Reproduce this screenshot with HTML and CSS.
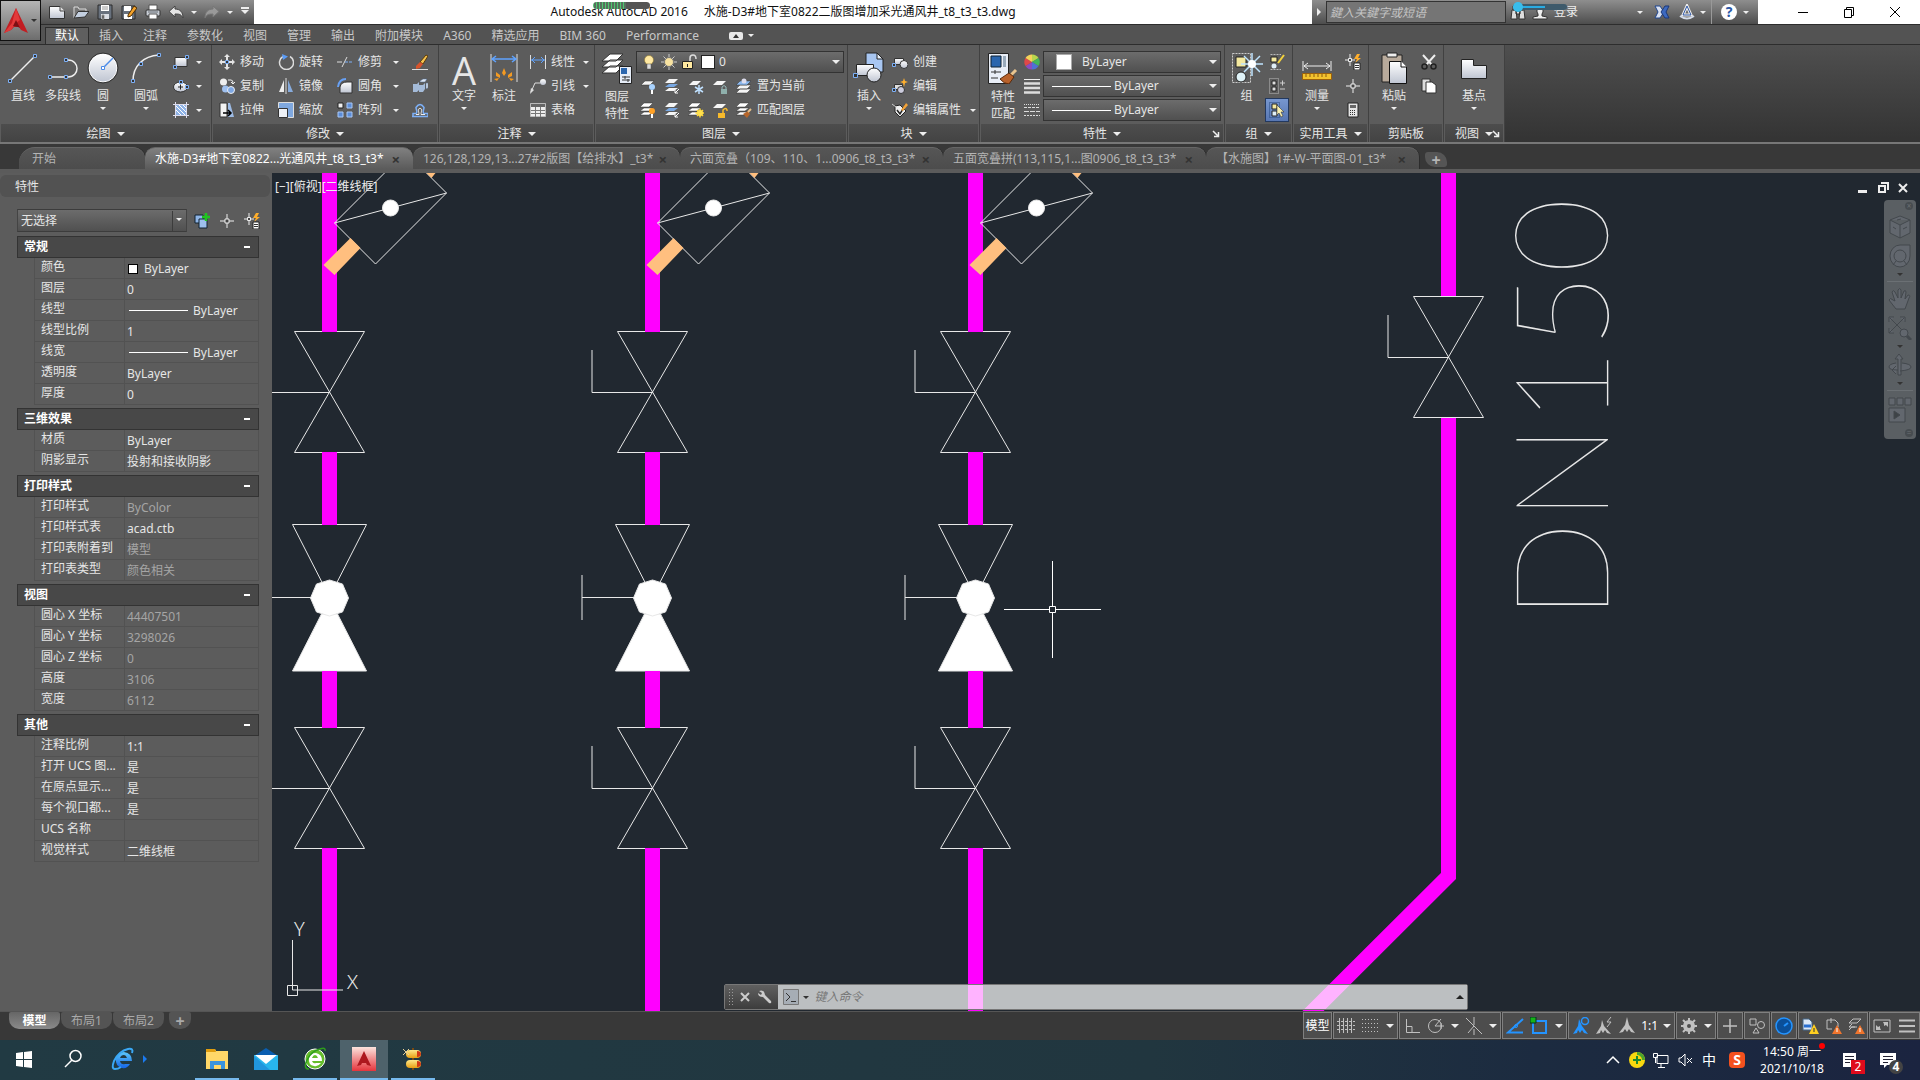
FILE: index.html
```html
<!DOCTYPE html>
<html lang="zh-CN">
<head>
<meta charset="utf-8">
<meta name="viewport" content="width=device-width, initial-scale=1.0">
<title>Autodesk AutoCAD 2016</title>
<link rel="stylesheet" href="styles.css">
</head>
<body>
<!-- icon symbols -->
<svg class="defs" aria-hidden="true">
<defs>
<linearGradient id="gw" x1="0" y1="0" x2="0" y2="1"><stop offset="0" stop-color="#fff"/><stop offset="1" stop-color="#bfc5d2"/></linearGradient>
<linearGradient id="gb" x1="0" y1="0" x2="0" y2="1"><stop offset="0" stop-color="#5cc8fb"/><stop offset="1" stop-color="#1565e8"/></linearGradient>
<linearGradient id="gr" x1="0" y1="0" x2="0" y2="1"><stop offset="0" stop-color="#fce3dd"/><stop offset="1" stop-color="#e5343c"/></linearGradient>
<linearGradient id="gy" x1="0" y1="0" x2="0" y2="1"><stop offset="0" stop-color="#ffe98a"/><stop offset="1" stop-color="#e9a013"/></linearGradient>

<symbol id="logo" viewBox="0 0 24 26"><path d="M12 0 0 25l7-3 3-3h5l2 3 7 3Z" fill="#c21d22"/><path d="M12 0 8 15 0 25l7-3 5-7 4-3Z" fill="#e2393a"/><path d="m9 18 3-6 4 8-2-1Z" fill="#7c0f14"/></symbol>
<symbol id="new" viewBox="0 0 16 16"><path d="M.5 2.500h11l4 4v8H.5Z" fill="url(#gw)" stroke="#333"/><path d="M11 2v5h5" fill="#ddd" stroke="#444"/></symbol>
<symbol id="open" viewBox="0 0 16 16"><path d="M1 14V3h4l1 2h7v3" fill="#777" stroke="#ddd"/><path d="M1 14 5 7.500h11L12 13Z" fill="#c3cfe0" stroke="#333"/></symbol>
<symbol id="save" viewBox="0 0 16 16"><path d="M1 1h14v14H1Z" fill="#68717d" stroke="#2d2d2d"/><path d="M4 1h8v6H4Z" fill="#fff"/><path d="M4 10h8v5H4Z" fill="#d9dde4"/><path d="M5 11h2v4H5ZM5 3h6M5 5h6" fill="#333" stroke="#999"/></symbol>
<symbol id="saveas" viewBox="0 0 16 16"><path d="M1 2h13v13H1Z" fill="#68717d" stroke="#2d2d2d"/><path d="M3 2h7v5H3ZM3 10h8v5H3Z" fill="#fff"/><path d="m7 11 6-9 3 2-6 8-3 1Z" fill="#f3a22b" stroke="#4d2e05"/></symbol>
<symbol id="print" viewBox="0 0 16 16"><path d="M4 6V1h8v5" fill="#fff" stroke="#555"/><rect x="1" y="6" width="14" height="6" rx="1" fill="#c9ced6" stroke="#333"/><path d="M4 10h8v5H4Z" fill="#fff" stroke="#555"/><path d="M3 8h10" stroke="#6a7077"/></symbol>
<symbol id="undo" viewBox="0 0 16 16"><path d="M7 2v3c5 0 8 3 8 9-2-4-4-4-8-4v3L1 7.500Z" fill="#e4e4e4" stroke="#444"/></symbol>
<symbol id="redo" viewBox="0 0 16 16"><path d="M9 2v3c-5 0-8 3-8 9 2-4 4-4 8-4v3l6-5.500Z" fill="#999" stroke="#777"/></symbol>
<symbol id="binoc" viewBox="0 0 16 16"><path d="M2 6h4l1 9H1Zm8 0h4l1 9H9ZM3 2h3v4H3Zm7 0h3v4h-3ZM6 7h4v3H6Z" fill="#ddd" stroke="#333"/></symbol>
<symbol id="user" viewBox="0 0 16 16"><path d="M5 3h6v5l-1 2v2l5 1v2H1v-2l5-1v-2L5 8Z" fill="#eee" stroke="#333"/></symbol>
<symbol id="exch" viewBox="0 0 16 16"><path d="M1 2h5l4 6-4 6H1l3-6Z" fill="#d9e1f1" stroke="#20468f"/><path d="M15 2h-4L7 8l4 6h4l-3-6Z" fill="#3c69c0" stroke="#1d3876"/></symbol>
<symbol id="a360" viewBox="0 0 16 16"><path d="M8 2 12 11H4Z" fill="none" stroke="#eee" stroke-width="3"/><path d="M8 2 12 11H4Z" fill="none" stroke="#2e57a6"/><path d="M1 12q7 5 14 0" fill="none" stroke="#d5ddeb" stroke-width="2"/></symbol>
<symbol id="pin" viewBox="0 0 14 8"><rect width="14" height="8" rx="2" fill="#e8e8e8"/><path d="m7 2 3 4H4Z" fill="#333"/></symbol>

<symbol id="line" viewBox="0 0 32 32"><path d="M3 29 28 4" stroke="#eee" stroke-width="1.500"/><path d="M1.500 27.500h3v3h-3ZM26.500 2.500h3v3h-3Z" fill="#333" stroke="#7db0f7"/></symbol>
<symbol id="pline" viewBox="0 0 32 32"><path d="M3 25h18c12 0 12-17 0-17" fill="none" stroke="#eee" stroke-width="1.500"/><path d="M1.500 23.500h3v3h-3ZM17.500 23.500h3v3h-3ZM17.500 6.500h3v3h-3Z" fill="#333" stroke="#7db0f7"/></symbol>
<symbol id="circle" viewBox="0 0 32 32"><circle cx="16" cy="16" r="14" fill="url(#gw)" stroke="#fff"/><circle cx="16" cy="16" r="15" fill="none" stroke="#333"/><path d="M16 16 26 6" stroke="#4a8ae8" stroke-width="1.500"/><path d="M14.500 14.500h3v3h-3Z" fill="#fff" stroke="#4a8ae8"/></symbol>
<symbol id="arc" viewBox="0 0 32 32"><path d="M3 29C3 14 13 4 29 3" fill="none" stroke="#eee" stroke-width="1.500"/><path d="M1.500 27.500h3v3h-3ZM9.500 10.500h3v3h-3ZM27.500 1.500h3v3h-3Z" fill="#333" stroke="#7db0f7"/></symbol>
<symbol id="rect" viewBox="0 0 16 16"><path d="M2 3.500h12v9H2Z" fill="url(#gw)" stroke="#333"/><path d="M.5 11.500h3v3h-3ZM12.500 1.500h3v3h-3Z" fill="#333" stroke="#7db0f7"/></symbol>
<symbol id="ellipse" viewBox="0 0 16 16"><ellipse cx="7.500" cy="9" rx="7" ry="5" fill="url(#gw)" stroke="#333"/><path d="M5 9h5M7.500 6.500v5" stroke="#222"/><path d="M6.500 2.500h3v3h-3ZM12.500 7.500h3v3h-3Z" fill="#333" stroke="#7db0f7"/></symbol>
<symbol id="hatch" viewBox="0 0 16 16"><path d="M3 3h10v10H3Z" fill="#8fb3e6"/><path d="m3 8 5 5M3 4l9 9M6 3l7 7M10 3l3 3" stroke="#fff"/><path d="M2.500 0v16M13.500 0v16M0 2.500h16M0 13.500h16" stroke="#dde" /></symbol>
<symbol id="move" viewBox="0 0 16 16"><path d="m8 0 3 3H9v3H7V3H5ZM8 16l3-3H9v-3H7v3H5ZM0 8l3-3v2h3v2H3v2ZM16 8l-3-3v2h-3v2h3v2Z" fill="#e4e4e4"/><path d="M6.500 6.500h3v3h-3Z" fill="#333" stroke="#7db0f7"/></symbol>
<symbol id="copy" viewBox="0 0 16 16"><circle cx="4.500" cy="4" r="3.500" fill="#eee"/><circle cx="6.500" cy="11" r="3.500" fill="#9fc0ef"/><circle cx="12" cy="12" r="3.500" fill="#7ea8e4" stroke="#eee"/><path d="M9 2h3q2 0 2 3m-2-1 2 2 2-2" fill="none" stroke="#eee"/></symbol>
<symbol id="stretch" viewBox="0 0 16 16"><path d="M1 1h7v14H1Z" fill="#f2f2f2" stroke="#333"/><path d="M9 1h2l4 14H9Z" fill="#9dbbe4"/><path d="M4 11h7M9 8l3 3-3 3" fill="none" stroke="#000" stroke-width="1.500"/></symbol>
<symbol id="rotate" viewBox="0 0 16 16"><path d="M5 2.500a7 7 0 1 0 7 0" fill="none" stroke="#ddd" stroke-width="1.500"/><path d="m4 0 6 2.500L5 6Z" fill="#5a9bf5"/></symbol>
<symbol id="mirror" viewBox="0 0 16 16"><path d="M6 2v12H1Z" fill="#eee"/><path d="M10 2v12h5Z" fill="#87abdc"/><path d="M8 0v16" stroke="#ddd"/></symbol>
<symbol id="scale" viewBox="0 0 16 16"><path d="M.5.5h15v15H.5Z" fill="#7fa8df" stroke="#ddd"/><path d="M.5 6.500h9v9h-9Z" fill="#eef1f6" stroke="#333"/></symbol>
<symbol id="trim" viewBox="0 0 16 16"><path d="M0 8h5M5 13 10 3" stroke="#ddd"/><path d="M8 8h8" stroke="#7db0f7" stroke-dasharray="3 1"/></symbol>
<symbol id="fillet" viewBox="0 0 16 16"><path d="M3 15V9q1-5 7-5h5v11Z" fill="url(#gw)" stroke="#333"/><path d="M1 9Q2 1 9 1" fill="none" stroke="#67a0f4" stroke-width="2"/></symbol>
<symbol id="array" viewBox="0 0 16 16"><path d="M1 1h5v5H1Z" fill="#eee" stroke="#222"/><path d="M10 1h5v5h-5ZM1 10h5v5H1ZM10 10h5v5h-5Z" fill="#5c8dd8" stroke="#a9c8f6"/></symbol>
<symbol id="brush" viewBox="0 0 16 16"><path d="m8 8 6-7 2 1-5 8Z" fill="#f5c350" stroke="#5b3a0a"/><path d="m4 12 4-4 3 2-3 4-4 1Z" fill="#d7542c"/><path d="M0 15.500h16" stroke="#ddd"/></symbol>
<symbol id="explode" viewBox="0 0 16 16"><path d="M1 6h4l2-2v8l-2 2H1ZM7 7h4l2-2v6l-2 3H7Z" fill="#a4bbd9"/><path d="m8 3 3-2h4l-2 3H8Zm6 2h2v5l-2 1Z" fill="#dbe6f5" stroke="#4a6488" stroke-width=".5"/></symbol>
<symbol id="offset" viewBox="0 0 16 16"><path d="M0 14.500h16v-3h-4c-2-1 0-4 0-6q-4-6-8 0c0 2 2 5 0 6H1v3" fill="none" stroke="#7db0f7" stroke-width="1.500"/><path d="M4 12.500h3c0-3-2-6 1-6s1 3 1 6h4" fill="none" stroke="#eee"/></symbol>
<symbol id="dim" viewBox="0 0 32 32"><path d="M3 2v28M29 2v28" stroke="#ddd"/><path d="M4 7h24M8 4 4 7l4 3M24 4l4 3-4 3" fill="none" stroke="#5fa3ff" stroke-width="1.500"/><path d="m16 16 2 5-2 3-2-3ZM8 20l4 3v3l-4-2ZM24 20l-4 3v3l4-2ZM6 27l5-1-2 3ZM26 27l-5-1 2 3Z" fill="#f39a22"/></symbol>
<symbol id="linear" viewBox="0 0 16 16"><path d="M.5 1v14M15.500 1v14" stroke="#ddd"/><path d="M1 6h14M5 3 2 6l3 3M11 3l3 3-3 3" fill="none" stroke="#5fa3ff"/></symbol>
<symbol id="leader" viewBox="0 0 16 16"><path d="M1 14 5 5h5" fill="none" stroke="#ddd"/><path d="m0 16 1-6 3 2Z" fill="#ddd"/><circle cx="13" cy="4" r="3" fill="url(#gw)"/></symbol>
<symbol id="table" viewBox="0 0 16 16"><path d="M.5 1.500h15v13H.5Z" fill="#eee" stroke="#bbb"/><path d="M1 2h14v3H1Z" fill="#666"/><path d="M1 8.500h14M1 11.500h14M5.500 5v10M10.500 5v10" stroke="#777"/></symbol>
<symbol id="layers" viewBox="0 0 32 32"><path d="m1 21 8-7h13l-7 7ZM1 15l8-7h13l-7 7ZM1 9l8-7h13l-7 7Z" fill="#fff" stroke="#333"/><path d="M18.500 14.500h12v17h-12Z" fill="#e6edf8" stroke="#222"/><path d="M20 16h6v6h-6Z" fill="#2b66ae"/><path d="M21 25h8M21 28h8M24 24v3M27 27v3" stroke="#333"/></symbol>
<symbol id="lay1" viewBox="0 0 16 16"><path d="m1 7 4-4h9l-4 4Z" fill="#f5f5f5" stroke="#333" stroke-width=".5"/><circle cx="12" cy="9" r="3" fill="#a9d3ff"/><path d="M12 12v4" stroke="#fff" stroke-width="2"/></symbol>
<symbol id="lay2" viewBox="0 0 16 16"><path d="m1 13 4-3h9l-4 3ZM1 5l4-4h9l-4 4Z" fill="#f5f5f5"/><path d="m1 9 4-3h9l-4 3Z" fill="#78a8e3"/><path d="m15 11-4 4m0-3v3h3" fill="none" stroke="#fff"/></symbol>
<symbol id="lay3" viewBox="0 0 16 16"><path d="m1 7 4-4h8l-4 4Z" fill="#f5f5f5"/><path d="M11 7v9M7 9l8 5M15 9l-8 5" stroke="#bfe0ff" stroke-width="1.500"/></symbol>
<symbol id="lay4" viewBox="0 0 16 16"><path d="m1 7 4-4h9l-4 4Z" fill="#f5f5f5"/><path d="M10 11V9q2-3 4 0v2" fill="none" stroke="#9bb"/><path d="M9 11h6v5H9Z" fill="#8fb0ac"/></symbol>
<symbol id="lay5" viewBox="0 0 16 16"><path d="m0 15 4-4h11l-4 4ZM0 11l4-4h11l-4 4Z" fill="#f5f5f5" stroke="#333" stroke-width=".5"/><path d="m0 7 4-4h11l-4 4Z" fill="#8cb9ef" stroke="#333" stroke-width=".5"/><circle cx="8" cy="3" r="2.500" fill="#dde"/></symbol>
<symbol id="lay6" viewBox="0 0 16 16"><path d="m0 13 4-3h9l-4 3ZM0 9l4-3h9L9 9ZM0 5l4-4h9L9 5Z" fill="#fff" stroke="#333" stroke-width=".5"/><circle cx="12" cy="9" r="3" fill="#ffa126"/><path d="M12 12v4" stroke="#fff" stroke-width="2"/></symbol>
<symbol id="lay7" viewBox="0 0 16 16"><path d="m0 13 4-3h9l-4 3ZM0 9l4-3h9L9 9ZM0 5l4-4h9L9 5Z" fill="#fff" stroke="#333" stroke-width=".5"/><path d="M12 6.500v9M7.500 11h9M9 8l6 6M15 8l-6 6" stroke="#ffd630" stroke-width="1.500"/><circle cx="12" cy="11" r="3" fill="#ffe04d"/></symbol>
<symbol id="lay8" viewBox="0 0 16 16"><path d="m1 6 4-4h9l-4 4Z" fill="#f5f5f5"/><path d="M11 11V8q3-3 4 0v1" fill="none" stroke="#f7ba2b" stroke-width="1.500"/><path d="M6 11h7v5H6Z" fill="#f7ba2b"/></symbol>
<symbol id="lay9" viewBox="0 0 16 16"><path d="m0 13 4-3h9l-4 3ZM0 9l4-3h9L9 9ZM0 5l4-4h9L9 5Z" fill="#fff" stroke="#333" stroke-width=".5"/><path d="m7 12 5-3 2 3-3 4Z" fill="#b5652a"/><path d="m12 10 3-3" stroke="#e9c08a" stroke-width="2"/></symbol>
<symbol id="bulb" viewBox="0 0 16 16"><circle cx="8" cy="6" r="4.500" fill="#ffe9a3" stroke="#8d7322" stroke-width=".5"/><path d="M6 10h4v5H6Z" fill="#ddd" stroke="#555" stroke-width=".5"/></symbol>
<symbol id="sun" viewBox="0 0 16 16"><path d="M8 0v16M0 8h16M2.500 2.500l11 11M13.500 2.500l-11 11" stroke="#ccc"/><circle cx="8" cy="8" r="4.500" fill="#f7e2a0" stroke="#777"/></symbol>
<symbol id="unlock" viewBox="0 0 16 16"><path d="M9 8V4q0-3 3-3 3 0 3 4" fill="none" stroke="#ddd" stroke-width="1.500"/><path d="M1.500 7.500h10v7h-10Z" fill="#ffe9a0" stroke="#222"/><path d="M6.500 10v3" stroke="#222"/></symbol>
<symbol id="insert" viewBox="0 0 32 32"><path d="M13 1h11l6 6v13H13Z" fill="#a8c6f1" stroke="#222"/><path d="M24 1v6h6Z" fill="#e8f0fb" stroke="#222"/><path d="M3.500 12.500h17v11h-17Z" fill="url(#gw)" stroke="#222"/><circle cx="21" cy="23" r="7" fill="url(#gw)" stroke="#222"/><path d="M.5 21.500h4v4h-4Z" fill="#333" stroke="#7db0f7"/></symbol>
<symbol id="create" viewBox="0 0 16 16"><path d="M2.500 4.500h9v6h-9Z" fill="url(#gw)" stroke="#333"/><circle cx="12" cy="10.500" r="4" fill="url(#gw)" stroke="#333"/><path d="M.5 9.500h3v3h-3Z" fill="#333" stroke="#7db0f7"/></symbol>
<symbol id="bedit" viewBox="0 0 16 16"><path d="M2.500 6.500h8v5h-8Z" fill="#ddd" stroke="#333"/><circle cx="9" cy="12" r="3.500" fill="#ccd" stroke="#333"/><path d="m12 0 1 3 3 1-3 1-1 4-1-4-3-1 3-1Z" fill="#ffb02e"/><path d="M.5 10.500h3v3h-3Z" fill="#333" stroke="#7db0f7"/></symbol>
<symbol id="attr" viewBox="0 0 16 16"><path d="m3 4 5-1 6 6-6 6-5-5Z" fill="#eee" stroke="#222"/><path d="m5 8 3 4 6-10" fill="none" stroke="#222" stroke-width="1.500"/><path d="m9 8 5-7 2 2-5 6Z" fill="#f2a33a"/><path d="m0 2 4 3" stroke="#ccc"/></symbol>
<symbol id="match" viewBox="0 0 32 32"><path d="M1.500 1.500h20v30h-20Z" fill="#e9eef7" stroke="#222"/><path d="M4 4h10v11H4Z" fill="#2b66ae" stroke="#123"/><path d="M16 4h3v11h-3Z" fill="#9ab"/><path d="M4 20h10M4 26h7M8 18v4" stroke="#333"/><path d="m24 23 5-5" stroke="#eac58f" stroke-width="3"/><path d="m13 27 9-6 5 4-5 7q-5 0-9-5Z" fill="#b9622b" stroke="#5a2b0c"/></symbol>
<symbol id="wheel" viewBox="0 0 16 16"><path d="M8 8V.500A7.500 7.500 0 0 1 14.500 4Z" fill="#b9d64c"/><path d="m8 8 6.500-4a7.500 7.500 0 0 1 0 8Z" fill="#44b45b"/><path d="m8 8 6.500 4A7.500 7.500 0 0 1 8 15.500Z" fill="#4d72d4"/><path d="M8 8v7.500A7.500 7.500 0 0 1 1.500 12Z" fill="#8b4bc0"/><path d="m8 8-6.500 4a7.500 7.500 0 0 1 0-8Z" fill="#e04848"/><path d="M8 8 1.500 4A7.500 7.500 0 0 1 8 .5Z" fill="#f6d25a"/></symbol>
<symbol id="lwt" viewBox="0 0 16 16"><path d="M0 1.500h16" stroke="#eee"/><path d="M0 5.500h16M0 10h16M0 14.500h16" stroke="#ddd" stroke-width="2.500"/></symbol>
<symbol id="ltype" viewBox="0 0 16 16"><path d="M0 2.500h16" stroke="#ddd" stroke-dasharray="1 1"/><path d="M0 5.500h16" stroke="#ddd" stroke-dasharray="3 1"/><path d="M0 9.500h16" stroke="#ddd" stroke-dasharray="5 1"/><path d="M0 13.500h16" stroke="#ddd" stroke-dasharray="2 1"/></symbol>
<symbol id="group" viewBox="0 0 32 32"><path d="M1.500 1.500h18v29h-18Z" fill="none" stroke="#ccc" stroke-dasharray="2 1"/><path d="M5 5h10v10H5Z" fill="#f4e9a0" stroke="#222"/><circle cx="10" cy="25" r="5" fill="#dff2f7" stroke="#222"/><path d="M21 1v23M10 12h22M13 4l16 16M29 4 13 20" stroke="#bfe4ff" stroke-width="1.500"/><circle cx="21" cy="12" r="4" fill="#fff"/></symbol>
<symbol id="ungroup" viewBox="0 0 16 16"><path d="M1.500.5H12M1.500 15.500H12" stroke="#bbb" stroke-dasharray="2 1"/><path d="M2 3h6v5H2Z" fill="#f4e9a0" stroke="#222"/><circle cx="5" cy="12" r="2.500" fill="#dfeef7"/><path d="m9 9 6-8" stroke="#f4d23c" stroke-width="2"/></symbol>
<symbol id="gedit" viewBox="0 0 16 16"><path d="M.5.500h9v15h-9Z" fill="none" stroke="#bbb" stroke-dasharray="1 1"/><path d="M3 3h4v4H3ZM3 9h4v4H3Z" fill="#ddd" stroke="#222"/><path d="M11 5h5M13.500 2.500v5M11 11h5" stroke="#ccc"/></symbol>
<symbol id="gsel" viewBox="0 0 16 16"><path d="M.5.500h10v15H.5Z" fill="none" stroke="#26487e" stroke-dasharray="1 1"/><path d="M3 2h5v5H3Z" fill="#f4e9a0" stroke="#222"/><path d="M3 9h5v5H3Z" fill="#dfeef7" stroke="#222"/><path d="M8 3v10l2-2 2 4 2-1-2-4h3Z" fill="#f7eeb0" stroke="#222" stroke-width=".5"/></symbol>
<symbol id="measure" viewBox="0 0 32 32"><path d="M2 9v10M30 9v10M3 14h26M7 11l-4 3 4 3M25 11l4 3-4 3" fill="none" stroke="#eee"/><path d="M1.500 21.500h29v6h-29Z" fill="#f2c22e" stroke="#9a5f0b"/><path d="M5 22v3M9 22v3M13 22v3M17 22v3M21 22v3M25 22v3" stroke="#8a5a10"/></symbol>
<symbol id="qsel" viewBox="0 0 16 16"><path d="M5 0v12M0 6h10" stroke="#eee"/><path d="M3.500 4.500h3v3h-3Z" fill="#444" stroke="#eee"/><path d="m12 0-3 5h3l-2 4 6-5h-3l2-4Z" fill="#ffae2b"/><path d="M9 9h6v7H9Z" fill="#fff" stroke="#222"/><path d="M10 11.500h4M10 13.500h4" stroke="#333"/></symbol>
<symbol id="point" viewBox="0 0 16 16"><path d="M8 1v14M1 8h14" stroke="#eee"/><path d="M6 6h4v4H6Z" fill="#444" stroke="#eee"/></symbol>
<symbol id="calc" viewBox="0 0 16 16"><path d="M3 1h10v14H3Z" fill="#e5e5e5" stroke="#222"/><path d="M5 3h6v3H5Z" fill="#666"/><path d="M5 8.500h6M5 10.500h6M5 12.500h6" stroke="#333" stroke-dasharray="1 1"/></symbol>
<symbol id="paste" viewBox="0 0 32 32"><path d="M4 3h20v27H4Z" fill="#b8aa9b" stroke="#222"/><path d="M9 1h10v4H9Z" fill="#eee" stroke="#222"/><path d="M11.500 9.500h12l5 5v17h-17Z" fill="url(#gw)" stroke="#111"/><path d="M23 9v6h6" fill="#fff" stroke="#111"/></symbol>
<symbol id="cut" viewBox="0 0 16 16"><path d="m2 1 9 10M14 1 5 11" stroke="#eee" stroke-width="2"/><circle cx="3.500" cy="12.500" r="2.500" fill="none" stroke="#222" stroke-width="1.500"/><circle cx="12.500" cy="12.500" r="2.500" fill="none" stroke="#222" stroke-width="1.500"/></symbol>
<symbol id="clip" viewBox="0 0 16 16"><path d="M1 1h8v12H1Z" fill="#ddd" stroke="#333"/><path d="M5 4h6l4 3v8H5Z" fill="#fff" stroke="#333"/></symbol>
<symbol id="base" viewBox="0 0 32 32"><path d="M3.500 7.500h12v6h13v13h-25Z" fill="url(#gw)" stroke="#222"/></symbol>
<symbol id="launch" viewBox="0 0 8 8"><path d="m1 1 5 5M6.500 2v4.500H2" fill="none" stroke="#eee" stroke-width="1.500"/></symbol>
<symbol id="pickadd" viewBox="0 0 16 16"><path d="M1 2h8v8H1Z" fill="#8fb5e6" stroke="#123"/><path d="M5 6h8v9H5Z" fill="#9dc0ee" stroke="#123"/><path d="M12 0v8M8 4h8" stroke="#1fc51f" stroke-width="2.500"/></symbol>

<!-- nav bar -->
<symbol id="cube" viewBox="0 0 24 24"><path d="m12 1 10 4v13l-10 5L2 18V5Zm0 22V10M2 5l10 5 10-5M9 5l4-1M5 12l3 2M15 14l4-2"/></symbol>
<symbol id="swheel" viewBox="0 0 24 24"><path d="M12 1h10v11a10 11 0 1 1-10-11Z"/><circle cx="12" cy="12" r="6"/><path d="m8 17-3 4M16 17l3 4"/></symbol>
<symbol id="hand" viewBox="0 0 24 24"><path d="M8 22 1 13q1-3 4 0l2 1L4 5q1-3 3 0l3 6V3q2-3 3 0v8l3-7q2-1 2 1l-1 7 3-4q3 0 1 3l-4 11Z"/></symbol>
<symbol id="zoomx" viewBox="0 0 24 24"><path d="m2 2 15 15M16 2 1 17M1 6V1h5M12 1h5v5M1 12v5h5"/><circle cx="16" cy="17" r="4"/><path d="m19 20 4 4" stroke-width="3"/></symbol>
<symbol id="orbit" viewBox="0 0 24 24"><path d="M10 22V6H7l4-5 4 5h-2v16ZM8 10q-7 1-7 4t9 3M14 10q9 1 9 4t-11 4M8 13l-4 4 4 4"/></symbol>
<symbol id="film" viewBox="0 0 24 28"><path d="M1 2h6v7H1ZM9 2h6v7H9ZM17 2h6v7h-6ZM1 12h16v14H1Z"/><path d="m6 15 6 4-6 4Z" fill="#3e4347"/></symbol>

<!-- status bar -->
<symbol id="s-grid" viewBox="0 0 18 18"><path d="M2.500 1v16M6.500 1v16M10.500 1v16M14.500 1v16M0 4.500h18M0 8.500h18M0 12.500h18" stroke-dasharray="3 1"/></symbol>
<symbol id="s-snap" viewBox="0 0 18 18"><path d="M1 2.500h16M1 6.500h16M1 10.500h16M1 14.500h16" stroke-dasharray="1 2"/></symbol>
<symbol id="s-ortho" viewBox="0 0 18 18"><path d="M3.500 2v13.500H17M3 9.500h6v6"/></symbol>
<symbol id="s-polar" viewBox="0 0 18 18"><circle cx="8" cy="9" r="6.500"/><path d="m8 9 6-7M8 9h9M14 6v6"/></symbol>
<symbol id="s-iso" viewBox="0 0 18 18"><path d="m1 1 16 16M9 0v8M9 12v6M9 9l-6 7"/></symbol>
<symbol id="s-track" viewBox="0 0 18 18"><path d="m17 2-15 13.500h15" stroke-width="2"/><circle cx="10" cy="9" r="1.500"/></symbol>
<symbol id="s-osnap" viewBox="0 0 18 18"><path d="M3 4h13v12H3Z" stroke-width="2"/><path d="M0 0h6v6H0Z" fill="#17b317" stroke="#032"/></symbol>
<symbol id="s-anno" viewBox="0 0 18 18"><path d="m9 0 2 8 6 8-4-1-2-3-2 3-2-3-2 3-4 1 6-8Z" fill="currentColor" stroke="none"/></symbol>
<symbol id="s-anno1" viewBox="0 0 18 18"><path d="m7 2 3 7 6 8-4-1-2-3-2 3-2-3-1 3-4 1 5-8Z" fill="currentColor" stroke="none"/><circle cx="13" cy="4" r="3.500" stroke-width="1.500"/></symbol>
<symbol id="s-anno2" viewBox="0 0 18 18"><path d="m7 3 2 6 7 8-4-1-2-3-2 3-2-3-1 3-4 1 5-8Z" fill="currentColor" stroke="none"/><path d="m16 0-4 5h4l-4 5"/></symbol>
<symbol id="s-gear" viewBox="0 0 18 18"><circle cx="9" cy="9" r="4" stroke-width="4"/><path d="M9 1v4M9 13v4M1 9h4M13 9h4M3 3l3 3M12 12l3 3M15 3l-3 3M6 12l-3 3" stroke-width="2"/></symbol>
<symbol id="s-plus" viewBox="0 0 18 18"><path d="M9 2v14M2 9h14" stroke-width="1.500"/></symbol>
<symbol id="s-units" viewBox="0 0 18 18"><path d="M2 2h6v6H2ZM5 16l3-5 3 5Z"/><circle cx="13" cy="8" r="3.500"/></symbol>
<symbol id="s-hw" viewBox="0 0 18 18"><circle cx="9" cy="9" r="8" fill="#0b4f99" stroke="#2494ff" stroke-width="1.500"/><path d="m9 9 4-3" stroke="#2494ff" stroke-width="2"/></symbol>
<symbol id="s-warn" viewBox="0 0 18 18"><path d="M2 2h6l3 3v8H2Z" fill="#dce7f5" stroke="#468"/><path d="M3 9h7" stroke="#2a6fd0" stroke-width="3"/><path d="m13 7 5 10H8Z" fill="#ffcf20" stroke="none"/><path d="M13 11v4" stroke="#333"/></symbol>
<symbol id="s-warn2" viewBox="0 0 18 18"><path d="M3 3h8l3 3v4M3 3v9h5M7 1v5"/><path d="m13 8 5 9H8Z" fill="#f0752d" stroke="none"/><path d="M13 11v4" stroke="#fff"/></symbol>
<symbol id="s-warn3" viewBox="0 0 18 18"><path d="m2 6 4-4h8l-4 4ZM2 10l3-3M2 13l3-3h5M2 10h6"/><path d="m13 8 5 9H8Z" fill="#f0752d" stroke="none"/><path d="M13 11v4" stroke="#fff"/></symbol>
<symbol id="s-full" viewBox="0 0 18 18"><path d="M1 3h16v12H1Z"/><path d="M10 5h5v5l-2-2-2 1V7ZM8 13H3V8l2 2 2-1v2Z" fill="currentColor" stroke="none"/></symbol>
<symbol id="s-menu" viewBox="0 0 18 18"><path d="M1 3.500h16M1 9h16M1 14.500h16" stroke-width="2"/></symbol>

<!-- pieces of the drawing, origin on the pipe axis -->
<g id="valve"><path d="M-35 .5h70l-70 121h70Z"/><path d="M0 61.500h-60.500V19"/></g>
<g id="check"><path d="M-37 .5h74L0 73Z"/><path d="M0 73.500h-70.500M-70.500 51v45"/><path d="m-8 90h16l29 57h-74Z" fill="#fff"/><path d="m0 56 13 4 6 14-6 14-13 4-13-4-6-14 6-14Z" fill="#fff"/></g>
<g id="gauge"><path d="M5 50 76-21l41 41-71 71Z"/><path d="M5 50 117 20"/><circle cx="61" cy="35" r="8" fill="#fff"/><path d="m21 65 10 10L5 102-6 92ZM96-1l10 1-4 5Z" fill="#ffbf7f" stroke="none"/></g>
<g id="riser"><path class="pipe" d="M0 0v159M0 279v73M0 498v57M0 675v163"/><use href="#valve" y="158"/><use href="#check" y="351"/><use href="#valve" y="554"/><path class="pipe" d="M0 152v7M0 279v7M0 346v6M0 498v6M0 549v6M0 675v6"/><use href="#gauge"/></g>
</defs>
</svg>

<header class="titlebar">
  <button class="app" aria-label="应用程序菜单"><svg class="i-logo"><use href="#logo"/></svg><span class="tri dark"></span></button>
  <div class="quick">
    <button aria-label="新建"><svg class="i"><use href="#new"/></svg></button>
    <button aria-label="打开"><svg class="i"><use href="#open"/></svg></button>
    <button aria-label="保存"><svg class="i"><use href="#save"/></svg></button>
    <button aria-label="另存为"><svg class="i"><use href="#saveas"/></svg></button>
    <button aria-label="打印"><svg class="i"><use href="#print"/></svg></button>
    <button aria-label="放弃"><svg class="i"><use href="#undo"/></svg></button>
    <button class="drop" aria-label="放弃列表"><span class="tri"></span></button>
    <button aria-label="重做"><svg class="i"><use href="#redo"/></svg></button>
    <button class="drop" aria-label="重做列表"><span class="tri"></span></button>
    <button class="custom" aria-label="自定义"><span class="tri big"></span></button>
  </div>
  <div class="title"><span>Autodesk AutoCAD 2016</span><span>水施-D3#地下室0822二版图增加采光通风井_t8_t3_t3.dwg</span><i class="pill"></i></div>
  <div class="info">
    <button class="expand" aria-label="展开"><span class="tri right"></span></button>
    <input type="text" placeholder="鍵入关鍵字或短语" aria-label="搜索">
    <button aria-label="查找"><svg class="i"><use href="#binoc"/></svg></button>
    <button class="login"><svg class="i"><use href="#user"/></svg>登录<span class="tri"></span></button>
    <button aria-label="Exchange"><svg class="i"><use href="#exch"/></svg></button>
    <button class="a360" aria-label="A360"><svg class="i"><use href="#a360"/></svg><span class="tri"></span></button>
    <button class="help" aria-label="帮助"><b>?</b><span class="tri"></span></button>
    <i class="slider"></i>
  </div>
  <div class="wincontrols">
    <button aria-label="最小化"><svg class="i"><path d="M3 8.500h10" stroke="#000"/></svg></button>
    <button aria-label="还原"><svg class="i"><path d="M3.500 5.500h7v8h-7ZM5.500 5V3.500h7v8H11" fill="none" stroke="#000"/></svg></button>
    <button aria-label="关闭"><svg class="i"><path d="m3 3 10 10M13 3 3 13" stroke="#000"/></svg></button>
  </div>
</header>

<nav class="menu">
  <button class="on">默认</button><button>插入</button><button>注释</button><button>参数化</button><button>视图</button><button>管理</button><button>输出</button><button>附加模块</button><button>A360</button><button>精选应用</button><button>BIM 360</button><button>Performance</button>
  <button class="pin" aria-label="最小化功能区"><svg><use href="#pin"/></svg><span class="tri"></span></button>
</nav>

<div class="ribbon">
  <section class="panel p-draw">
    <div class="tools">
      <button class="big"><svg><use href="#line"/></svg>直线</button>
      <button class="big"><svg><use href="#pline"/></svg>多段线</button>
      <button class="big"><svg><use href="#circle"/></svg>圆<span class="tri"></span></button>
      <button class="big wide"><svg><use href="#arc"/></svg>圆弧<span class="tri"></span></button>
      <div class="col">
        <button aria-label="矩形"><svg class="i"><use href="#rect"/></svg><span class="tri"></span></button>
        <button aria-label="椭圆"><svg class="i"><use href="#ellipse"/></svg><span class="tri"></span></button>
        <button aria-label="图案填充"><svg class="i"><use href="#hatch"/></svg><span class="tri"></span></button>
      </div>
    </div>
    <h2>绘图<span class="tri big"></span></h2>
  </section>
  <section class="panel p-modify">
    <div class="tools">
      <div class="col">
        <button><svg class="i"><use href="#move"/></svg>移动</button>
        <button><svg class="i"><use href="#copy"/></svg>复制</button>
        <button><svg class="i"><use href="#stretch"/></svg>拉伸</button>
      </div>
      <div class="col">
        <button><svg class="i"><use href="#rotate"/></svg>旋转</button>
        <button><svg class="i"><use href="#mirror"/></svg>镜像</button>
        <button><svg class="i"><use href="#scale"/></svg>缩放</button>
      </div>
      <div class="col last">
        <button><svg class="i"><use href="#trim"/></svg>修剪<span class="tri"></span></button>
        <button><svg class="i"><use href="#fillet"/></svg>圆角<span class="tri"></span></button>
        <button><svg class="i"><use href="#array"/></svg>阵列<span class="tri"></span></button>
      </div>
      <div class="col single">
        <button aria-label="删除"><svg class="i"><use href="#brush"/></svg></button>
        <button aria-label="分解"><svg class="i"><use href="#explode"/></svg></button>
        <button aria-label="偏移"><svg class="i"><use href="#offset"/></svg></button>
      </div>
    </div>
    <h2>修改<span class="tri big"></span></h2>
  </section>
  <section class="panel p-note">
    <div class="tools">
      <button class="big"><span class="letter">A</span>文字<span class="tri"></span></button>
      <button class="big"><svg><use href="#dim"/></svg>标注</button>
      <div class="col">
        <button><svg class="i"><use href="#linear"/></svg>线性<span class="tri"></span></button>
        <button><svg class="i"><use href="#leader"/></svg>引线<span class="tri"></span></button>
        <button><svg class="i"><use href="#table"/></svg>表格</button>
      </div>
    </div>
    <h2>注释<span class="tri big"></span></h2>
  </section>
  <section class="panel p-layer">
    <div class="tools">
      <button class="big two"><svg><use href="#layers"/></svg>图层<br>特性</button>
      <div class="col grow">
        <div class="combo">
          <svg class="i"><use href="#bulb"/></svg><svg class="i"><use href="#sun"/></svg><svg class="i"><use href="#unlock"/></svg><i class="swatch"></i>
          <select aria-label="图层"><option>0</option></select>
        </div>
        <div class="row">
          <button aria-label="关"><svg class="i"><use href="#lay1"/></svg></button>
          <button aria-label="隔离"><svg class="i"><use href="#lay2"/></svg></button>
          <button aria-label="冻结"><svg class="i"><use href="#lay3"/></svg></button>
          <button aria-label="锁定"><svg class="i"><use href="#lay4"/></svg></button>
          <button><svg class="i"><use href="#lay5"/></svg>置为当前</button>
        </div>
        <div class="row">
          <button aria-label="打开所有"><svg class="i"><use href="#lay6"/></svg></button>
          <button aria-label="取消隔离"><svg class="i"><use href="#lay2"/></svg></button>
          <button aria-label="解冻"><svg class="i"><use href="#lay7"/></svg></button>
          <button aria-label="解锁"><svg class="i"><use href="#lay8"/></svg></button>
          <button><svg class="i"><use href="#lay9"/></svg>匹配图层</button>
        </div>
      </div>
    </div>
    <h2>图层<span class="tri big"></span></h2>
  </section>
  <section class="panel p-block">
    <div class="tools">
      <button class="big"><svg><use href="#insert"/></svg>插入<span class="tri"></span></button>
      <div class="col grow">
        <button><svg class="i"><use href="#create"/></svg>创建</button>
        <button><svg class="i"><use href="#bedit"/></svg>编辑</button>
        <button><svg class="i"><use href="#attr"/></svg>编辑属性<span class="tri"></span></button>
      </div>
    </div>
    <h2>块<span class="tri big"></span></h2>
  </section>
  <section class="panel p-props">
    <div class="tools">
      <button class="big two"><svg><use href="#match"/></svg>特性<br>匹配</button>
      <div class="col grow">
        <div class="row"><svg class="i"><use href="#wheel"/></svg><div class="combo"><i class="swatch large"></i><select class="color" aria-label="对象颜色"><option>ByLayer</option></select></div></div>
        <div class="row"><svg class="i"><use href="#lwt"/></svg><div class="combo"><i class="rule"></i><select aria-label="线宽"><option>ByLayer</option></select></div></div>
        <div class="row"><svg class="i"><use href="#ltype"/></svg><div class="combo"><i class="rule"></i><select aria-label="线型"><option>ByLayer</option></select></div></div>
      </div>
    </div>
    <h2>特性<span class="tri big"></span><svg class="launch"><use href="#launch"/></svg></h2>
  </section>
  <section class="panel p-group">
    <div class="tools">
      <button class="big"><svg><use href="#group"/></svg>组</button>
      <div class="col">
        <button aria-label="解除编组"><svg class="i"><use href="#ungroup"/></svg></button>
        <button aria-label="组编辑"><svg class="i"><use href="#gedit"/></svg></button>
        <button class="pressed" aria-label="启用组选择"><svg class="i"><use href="#gsel"/></svg></button>
      </div>
    </div>
    <h2>组<span class="tri big"></span></h2>
  </section>
  <section class="panel p-util">
    <div class="tools">
      <button class="big"><svg><use href="#measure"/></svg>测量<span class="tri"></span></button>
      <div class="col">
        <button aria-label="快速选择"><svg class="i"><use href="#qsel"/></svg></button>
        <button aria-label="点坐标"><svg class="i"><use href="#point"/></svg></button>
        <button aria-label="计算器"><svg class="i"><use href="#calc"/></svg></button>
      </div>
    </div>
    <h2>实用工具<span class="tri big"></span></h2>
  </section>
  <section class="panel p-clip">
    <div class="tools">
      <button class="big"><svg><use href="#paste"/></svg>粘贴<span class="tri"></span></button>
      <div class="col">
        <button aria-label="剪切"><svg class="i"><use href="#cut"/></svg></button>
        <button aria-label="复制"><svg class="i"><use href="#clip"/></svg></button>
      </div>
    </div>
    <h2>剪贴板</h2>
  </section>
  <section class="panel p-view">
    <div class="tools"><button class="big"><svg><use href="#base"/></svg>基点<span class="tri"></span></button></div>
    <h2>视图<span class="tri big"></span><svg class="launch"><use href="#launch"/></svg></h2>
  </section>
</div>

<nav class="files">
  <button class="file first">开始</button>
  <button class="file f2 on">水施-D3#地下室0822...光通风井_t8_t3_t3*<b>×</b></button>
  <button class="file f3">126,128,129,13...27#2版图【给排水】_t3*<b>×</b></button>
  <button class="file f4">六面宽叠（109、110、1...0906_t8_t3_t3*<b>×</b></button>
  <button class="file f4">五面宽叠拼(113,115,1...图0906_t8_t3_t3*<b>×</b></button>
  <button class="file f6">【水施图】1#-W-平面图-01_t3*<b>×</b></button>
  <button class="add" aria-label="新图形">+</button>
</nav>

<main>
  <aside class="props">
    <h3>特性</h3>
    <div class="pick">
      <div class="combo"><select aria-label="选择对象"><option>无选择</option></select></div>
      <button aria-label="切换 PICKADD"><svg class="i"><use href="#pickadd"/></svg></button>
      <button aria-label="选择对象"><svg class="i"><use href="#point"/></svg></button>
      <button aria-label="快速选择"><svg class="i"><use href="#qsel"/></svg></button>
    </div>
    <button class="sec">常规<i></i></button>
    <table>
      <tr><th>颜色</th><td><i class="chip"></i>ByLayer</td></tr>
      <tr><th>图层</th><td>0</td></tr>
      <tr><th>线型</th><td><i class="rule"></i>ByLayer</td></tr>
      <tr><th>线型比例</th><td>1</td></tr>
      <tr><th>线宽</th><td><i class="rule"></i>ByLayer</td></tr>
      <tr><th>透明度</th><td>ByLayer</td></tr>
      <tr><th>厚度</th><td>0</td></tr>
    </table>
    <button class="sec">三维效果<i></i></button>
    <table>
      <tr><th>材质</th><td>ByLayer</td></tr>
      <tr><th>阴影显示</th><td>投射和接收阴影</td></tr>
    </table>
    <button class="sec">打印样式<i></i></button>
    <table>
      <tr><th>打印样式</th><td class="off">ByColor</td></tr>
      <tr><th>打印样式表</th><td>acad.ctb</td></tr>
      <tr><th>打印表附着到</th><td class="off">模型</td></tr>
      <tr><th>打印表类型</th><td class="off">颜色相关</td></tr>
    </table>
    <button class="sec">视图<i></i></button>
    <table>
      <tr><th>圆心 X 坐标</th><td class="off">44407501</td></tr>
      <tr><th>圆心 Y 坐标</th><td class="off">3298026</td></tr>
      <tr><th>圆心 Z 坐标</th><td class="off">0</td></tr>
      <tr><th>高度</th><td class="off">3106</td></tr>
      <tr><th>宽度</th><td class="off">6112</td></tr>
    </table>
    <button class="sec">其他<i></i></button>
    <table>
      <tr><th>注释比例</th><td>1:1</td></tr>
      <tr><th>打开 UCS 图...</th><td>是</td></tr>
      <tr><th>在原点显示...</th><td>是</td></tr>
      <tr><th>每个视口都...</th><td>是</td></tr>
      <tr><th>UCS 名称</th><td></td></tr>
      <tr><th>视觉样式</th><td>二维线框</td></tr>
    </table>
  </aside>

  <div class="canvas">
    <svg class="drawing" viewBox="0 0 1648 838" preserveAspectRatio="xMinYMin slice">
      <use href="#riser" x="57.500"/>
      <use href="#riser" x="380.500"/>
      <use href="#riser" x="703.500"/>
      <path class="pipe" d="M1176.500 0v124M1176.500 244v459L1035 844"/>
      <use href="#valve" x="1176.500" y="123"/>
      <text class="dn" transform="translate(1336 447) rotate(-90)">DN150</text>
      <!-- UCS icon -->
      <path d="M20.500 767v50H71M15.500 812.500h10v10h-10Z"/>
      <text class="ucs" x="22" y="763">Y</text>
      <text class="ucs" x="75" y="816">X</text>
      <!-- crosshair -->
      <path class="cross" d="M732 436.500h46M783 436.500h46M780.500 388v46M780.500 439v46M777.500 433.500h6v6h-6Z"/>
    </svg>
    <div class="viewlabel">[−][俯视][二维线框]</div>
    <div class="mdi">
      <button aria-label="最小化"><svg class="i"><path d="M3 10h9v3H3Z" fill="#eee"/></svg></button>
      <button aria-label="还原"><svg class="i"><path d="M4 6h6v6H4ZM6 3h7v7" fill="none" stroke="#eee" stroke-width="2"/></svg></button>
      <button aria-label="关闭"><svg class="i"><path d="m4 4 8 8M12 4l-8 8" stroke="#eee" stroke-width="2"/></svg></button>
    </div>
    <div class="navbar">
      <span class="dot">×</span>
      <button aria-label="ViewCube"><svg><use href="#cube"/></svg></button>
      <button aria-label="控制盘"><svg><use href="#swheel"/></svg></button>
      <span class="tri dark"></span><hr>
      <button aria-label="平移"><svg><use href="#hand"/></svg></button>
      <button aria-label="缩放"><svg><use href="#zoomx"/></svg></button>
      <span class="tri dark"></span>
      <button aria-label="动态观察"><svg><use href="#orbit"/></svg></button>
      <span class="tri dark"></span><hr>
      <button aria-label="ShowMotion"><svg class="tall"><use href="#film"/></svg></button>
      <span class="dot">=</span>
    </div>
    <div class="command">
      <div class="grip"><i></i>
        <button aria-label="关闭"><svg class="i"><path d="m4 4 8 8M12 4l-8 8" stroke="#ccc" stroke-width="2"/></svg></button>
        <button aria-label="自定义"><svg class="i"><path d="M2 2q5-2 6 4l6 6q1 3-2 2L6 8Q1 8 1 4l3 2 1-2Z" fill="#ccc"/></svg></button>
      </div>
      <div class="prompt">
        <svg class="i"><path d="M.5.500h15v15H.5Z" fill="#a6adb5" stroke="#777"/><path d="m3 4 4 4-4 4M8 12.500h5" fill="none" stroke="#333"/></svg><span class="tri dark"></span>
        <input type="text" placeholder="键入命令" aria-label="命令行"><span class="tri up"></span>
      </div>
    </div>
  </div>
</main>

<footer class="bottom">
  <div class="layouts"><button class="on">模型</button><button>布局1</button><button>布局2</button><button class="plus" aria-label="新建布局">+</button></div>
  <div class="status">
    <div class="seg g1"><button class="txt">模型</button></div>
    <div class="seg g2"><button aria-label="栅格"><svg><use href="#s-grid"/></svg></button><button aria-label="捕捉"><svg><use href="#s-snap"/></svg></button><span class="tri big"></span></div>
    <div class="seg g3"><button aria-label="正交"><svg><use href="#s-ortho"/></svg></button><button aria-label="极轴"><svg><use href="#s-polar"/></svg></button><span class="tri big"></span><button aria-label="等轴测"><svg><use href="#s-iso"/></svg></button><span class="tri big"></span></div>
    <div class="seg g2 blue"><button aria-label="对象追踪"><svg><use href="#s-track"/></svg></button><button aria-label="对象捕捉"><svg><use href="#s-osnap"/></svg></button><span class="tri big"></span></div>
    <div class="seg g4"><button class="blue" aria-label="注释可见性"><svg><use href="#s-anno1"/></svg></button><button aria-label="自动缩放"><svg><use href="#s-anno2"/></svg></button><button aria-label="注释比例"><svg><use href="#s-anno"/></svg></button><button class="txt">1:1</button><span class="tri big"></span></div>
    <div class="seg g5"><button aria-label="工作空间"><svg><use href="#s-gear"/></svg></button><span class="tri big"></span></div>
    <div class="seg g6"><button aria-label="注释监视器"><svg><use href="#s-plus"/></svg></button></div>
    <div class="seg g6"><button aria-label="隔离对象"><svg><use href="#s-units"/></svg></button></div>
    <div class="seg g6"><button aria-label="硬件加速"><svg><use href="#s-hw"/></svg></button></div>
    <div class="seg g7"><button aria-label="通知"><svg><use href="#s-warn"/></svg></button><button aria-label="外部参照"><svg><use href="#s-warn2"/></svg></button><button aria-label="图层通知"><svg><use href="#s-warn3"/></svg></button></div>
    <div class="seg g8"><button aria-label="全屏"><svg><use href="#s-full"/></svg></button><button aria-label="自定义"><svg><use href="#s-menu"/></svg></button></div>
  </div>
</footer>

<div class="taskbar">
  <button class="task" aria-label="开始"><svg viewBox="0 0 24 24"><path d="m4 6 7-1v7H4ZM12 5l8-1v8h-8ZM4 13h7v7l-7-1ZM12 13h8v8l-8-1Z" fill="#fff"/></svg></button>
  <button class="task" aria-label="搜索"><svg viewBox="0 0 24 24"><circle cx="14.500" cy="9" r="5.500" fill="none" stroke="#fff" stroke-width="1.500"/><path d="m11 13-7 7" stroke="#fff" stroke-width="1.500"/></svg></button>
  <button class="task ie" aria-label="Internet Explorer"><svg viewBox="0 0 24 24"><path d="M19 17q-3 5-8 4-7-2-6-9 1-7 8-7 8 1 8 9H9q1 4 5 3l5 0ZM9 11h7q-1-3-3-3-3 0-4 3Z" fill="url(#gb)"/><path d="M21 6q2-5-4-4Q8 4 3 14q-3 8 1 8 3 0 6-2" fill="none" stroke="#3aa8f5" stroke-width="2"/></svg><span class="tri right"></span></button>
  <button class="task run folder" aria-label="文件资源管理器"><svg viewBox="0 0 24 24"><path d="M1 2h9l1 2h12v18H1Z" fill="#ffd768"/><path d="M1 2h9l1 3H1Z" fill="#e09d0f"/><path d="M5 14h15v8h-4v-4h-7v4H5Z" fill="#3a93dd"/></svg></button>
  <button class="task" aria-label="邮件"><svg viewBox="0 0 24 24"><path d="m0 9 12-8 12 8Z" fill="#0a5eb0"/><path d="M0 8h24v15H0Z" fill="#28b5ec"/><path d="M1 8h22l-11 9Z" fill="#fff"/><path d="m0 9 16 14H0Z" fill="#2196dd"/></svg></button>
  <button class="task run" aria-label="360浏览器"><svg viewBox="0 0 24 24"><circle cx="12" cy="12" r="10" fill="#65bd2c" stroke="#fff"/><path d="M18 16q-3 4-7 3-6-1-5-8 1-5 7-5 6 1 6 8H9q1 3 4 2ZM9 11h6q-1-3-3-3t-3 3Z" fill="#fff"/><path d="M22 4q1-4-5-2Q8 4 4 13q-4 9 2 9" fill="none" stroke="#2f9d1d" stroke-width="1.500"/></svg></button>
  <button class="task run active" aria-label="AutoCAD"><svg viewBox="0 0 24 24"><path d="M0 0h24v24H0Z" fill="url(#gr)"/><path d="M12 4 5 19l4-1 1-2h4l1 2 4 1Z" fill="#ad171e"/></svg></button>
  <button class="task run" aria-label="工具"><svg viewBox="0 0 24 24"><path d="M12 1v22" stroke="#7a4a10" stroke-width="2"/><rect x="5" y="3" width="15" height="8" rx="4" fill="url(#gy)"/><rect x="5" y="13" width="15" height="8" rx="4" fill="url(#gy)"/><path d="M16 4q4 0 4 3t-4 3ZM16 14q4 0 4 3t-4 3Z" fill="#d33a14"/><path d="m2 2 6 6M8 2 2 8" stroke="#e8cf96"/></svg></button>
  <div class="tray">
    <button aria-label="显示隐藏的图标"><svg class="i"><path d="m2 11 6-6 6 6" fill="none" stroke="#fff" stroke-width="1.500"/></svg></button>
    <button aria-label="安全卫士"><svg class="i"><circle cx="8" cy="8" r="8" fill="#f8d80f"/><path d="M8 0a8 8 0 0 1 8 8h-3a5 5 0 0 0-5-5Z" fill="#4aa52c"/><path d="M8 4v8M4 8h8" stroke="#1b8a2d" stroke-width="2"/></svg></button>
    <button aria-label="网络"><svg class="i"><path d="M4 3.500h11v8H4ZM8 12v3M5 15.500h7M.5 1.500h4v4h-4ZM2.500 6v5" fill="none" stroke="#fff"/></svg></button>
    <button aria-label="音量"><svg class="i"><path d="M2 6h2l4-4v12l-4-4H2Z" fill="none" stroke="#fff"/><path d="m10 6 5 5M15 6l-5 5" stroke="#fff"/></svg></button>
    <button class="ime">中</button>
    <button class="sogou"><b>S</b></button>
    <time>14:50 周一<br>2021/10/18</time>
    <button class="note" aria-label="消息"><svg class="i"><path d="M1 1h13v14H1Z" fill="#fff"/><path d="M3 4.500h9M3 7.500h9M3 10.500h5" stroke="#223"/></svg><b class="red">2</b></button>
    <button class="note" aria-label="通知中心"><svg class="i"><path d="M0 1h16v12H7l-3 3v-3H0Z" fill="#fff"/><path d="M3 4.500h10M3 7.500h10M3 10.500h5" stroke="#223"/></svg><b>4</b></button>
  </div>
</div>
</body>
</html>
```
FILE: styles.css
```css
*{
    box-sizing:border-box;
}
html,body{
    height:100%;
}
body{
    margin:0;
    display:flex;
    flex-direction:column;
    overflow:hidden;
    background:#383838;
    color:#e6e6e6;
    font:12px/16px "Noto Sans","Noto Sans CJK SC",sans-serif;
}
button,select,input{
    margin:0;
    padding:0;
    border:0;
    background:none;
    color:inherit;
    font:inherit;
}
button{
    display:flex;
    align-items:center;
    justify-content:center;
    white-space:nowrap;
}
select{
    appearance:none;
    outline:0;
}
.defs{
    position:absolute;
    width:0;
    height:0;
}
.i{
    width:16px;
    height:16px;
    flex:none;
}
.tri{
    flex:none;
    width:0;
    height:0;
    border:3px solid transparent;
    border-top-color:#eee;
    border-bottom:0;
}
.tri.big{
    border-width:4px;
    border-bottom:0;
}
.tri.dark{
    border-top-color:#333;
}
.tri.right{
    border:4px solid transparent;
    border-left-color:#eee;
    border-right:0;
}
.tri.up{
    border:4px solid transparent;
    border-bottom-color:#222;
    border-top:0;
}

/* title bar */
.titlebar{
    flex:none;
    display:flex;
    height:24px;
    background:#fff;
    color:#111;
}
.app{
    position:relative;
    z-index:2;
    width:41px;
    height:41px;
    gap:3px;
    border:1px solid #111;
    background:linear-gradient(#b5b5b5,#6d6d6d);
}
.i-logo{
    width:24px;
    height:26px;
}
.quick,.info{
    display:flex;
    align-items:center;
    background:linear-gradient(#8e8e8e,#4d4d4d);
}
.quick{
    width:213px;
    padding-left:4px;
}
.quick button{
    width:24px;
}
.quick .drop{
    width:12px;
}
.quick .custom{
    width:18px;
}
.custom .tri{
    position:relative;
}
.custom .tri::before{
    content:"";
    position:absolute;
    left:-4px;
    top:-7px;
    width:8px;
    height:2px;
    background:#eee;
}
.title{
    position:relative;
    flex:1;
    display:flex;
    align-items:center;
    justify-content:center;
    gap:16px;
}
.pill{
    position:absolute;
    left:339px;
    top:2px;
    width:57px;
    height:7px;
    border-radius:4px;
    background:linear-gradient(#555,#555) right/24px 7px no-repeat,repeating-linear-gradient(90deg,#4fc46f 0 1px,#56705c 1px 3px);
}
.info{
    position:relative;
    width:446px;
    color:#eee;
}
.info input{
    width:180px;
    height:22px;
    padding:0 3px;
    border:1px solid #333;
    background:#757575;
}
input::placeholder{
    color:#c4c4c4;
    font-style:italic;
    opacity:1;
}
.info button{
    min-width:24px;
    height:24px;
}
.info .expand{
    min-width:14px;
}
.info .login{
    width:120px;
    gap:6px;
    padding:0 7px 0 2px;
}
.login .tri{
    margin-left:auto;
}
.info .a360{
    width:38px;
    gap:5px;
    border-right:1px solid #999;
}
.info .help{
    flex:1;
    gap:6px;
}
.help b{
    width:16px;
    border-radius:8px;
    background:#fff;
    color:#2a57a6;
    font-size:14px;
}
.slider{
    position:absolute;
    left:201px;
    top:4px;
    width:54px;
    height:6px;
    border-radius:3px;
    background:linear-gradient(#29abe2,#29abe2) 0 2px/32px 2px no-repeat,#3e5a6b;
}
.slider::before{
    content:"";
    position:absolute;
    top:-2px;
    width:10px;
    height:10px;
    border-radius:5px;
    background:#39bdec;
}
.wincontrols{
    display:flex;
    width:162px;
    padding:0 2px 0 22px;
}
.wincontrols button{
    flex:1;
}

/* ribbon tabs */
.menu{
    flex:none;
    display:flex;
    height:21px;
    padding-left:45px;
    border-top:1px solid #2d2d2d;
    border-bottom:1px solid #2d2d2d;
    background:#535353;
    color:#c8c8c8;
}
.menu button{
    padding:2px 10px 0;
}
.menu .on{
    margin-top:2px;
    padding:0 9px;
    border:1px solid #2d2d2d;
    border-bottom:0;
    background:#5f5f5f;
    color:#fff;
}
.pin{
    margin-left:10px;
    gap:5px;
}
.pin svg{
    width:14px;
    height:8px;
}

/* ribbon */
.ribbon{
    flex:none;
    display:flex;
    height:99px;
    border-bottom:2px solid #777;
    background:linear-gradient(#4f4f4f,#333);
}
.panel{
    flex:none;
    display:flex;
    flex-direction:column;
    border-right:1px solid #414141;
    background:#5c5c5c;
}
.panel h2{
    position:relative;
    display:flex;
    align-items:center;
    justify-content:center;
    gap:6px;
    height:18px;
    margin:0 1px;
    padding-top:1px;
    background:linear-gradient(#4d4d4d,#434343);
    font-size:12px;
    font-weight:400;
    white-space:nowrap;
}
.launch{
    position:absolute;
    right:3px;
    top:6px;
    width:8px;
    height:8px;
}
.tools{
    flex:1;
    display:flex;
    padding:5px 3px 0;
}
.p-draw{width:212px}
.p-modify{width:227px}
.p-note{width:156px}
.p-layer{width:253px}
.p-block{width:132px}
.p-props{width:245px}
.p-group{width:68px}
.p-util{width:76px}
.p-clip{width:75px}
.p-view{width:61px}
button.big{
    flex:none;
    flex-direction:column;
    justify-content:flex-start;
    width:40px;
    padding-top:2px;
}
button.big svg{
    flex:none;
    width:32px;
    height:32px;
    margin-bottom:4px;
}
button.big .tri{
    margin-top:3px;
}
button.two{
    line-height:17px;
}
button.wide{
    width:46px;
}
.letter{
    height:36px;
    font:38px/36px "Open Sans",sans-serif;
}
.col{
    flex:none;
    display:flex;
    flex-direction:column;
}
.grow{
    flex:1;
}
.col button{
    height:24px;
    gap:5px;
    justify-content:flex-start;
}
.row{
    display:flex;
    align-items:center;
    height:24px;
}
.p-draw .col{
    padding-left:4px;
}
.p-draw .col .tri{
    margin-left:2px;
}
.p-modify .tools{
    padding-left:7px;
}
.p-modify .col{
    width:59px;
}
.p-modify .last{
    width:75px;
}
.p-modify .single{
    width:16px;
}
.p-modify .last .tri{
    margin-left:6px;
}
.p-note .tools{
    padding-left:5px;
}
.p-note .col{
    padding-left:6px;
}
.p-note .col .tri{
    margin-left:3px;
}
.combo{
    flex:1;
    position:relative;
    display:flex;
    align-items:center;
    height:22px;
    border:1px solid #333;
    background:linear-gradient(#6c6c6c,#505050);
}
.combo::after{
    content:"";
    position:absolute;
    right:3px;
    top:8px;
    border:4px solid transparent;
    border-top-color:#eee;
    border-bottom:0;
}
.combo select{
    flex:1;
    height:20px;
}
.p-layer button.big{
    width:38px;
}
.p-layer .combo{
    flex:none;
    margin:1px 0;
    padding-left:4px;
    gap:4px;
}
.p-layer .row{
    padding-left:4px;
}
.p-layer .row button{
    width:24px;
}
.swatch{
    width:14px;
    height:14px;
    border:1px solid #222;
    background:#fff;
}
.swatch.large{
    width:16px;
    height:16px;
    margin:0 10px 0 12px;
    border-color:#aaa;
}
.rule{
    width:59px;
    height:1px;
    background:#fff;
}
.p-block button.big{
    width:36px;
}
.p-block .col{
    padding-left:5px;
}
.p-block .col .tri{
    margin-left:4px;
}
.p-props .col{
    padding-left:1px;
}
.p-props .row{
    gap:3px;
}
.p-props .combo .rule{
    margin:0 3px 0 8px;
}
.p-group button.big{
    width:37px;
}
.p-util button.big{
    width:38px;
}
.p-group .col button{
    width:24px;
    justify-content:center;
}
.col .pressed{
    border:1px solid #23395f;
    background:linear-gradient(#7797cf,#5877b3);
}
.p-util .tools{
    padding-left:5px;
}
.p-util .col{
    padding-left:9px;
}
.p-clip .tools{
    padding-left:5px;
}
.p-clip .col{
    padding-left:7px;
}
.p-view .tools{
    justify-content:center;
}

/* drawing tabs */
.files{
    flex:none;
    display:flex;
    height:29px;
    padding:3px 0 0 19px;
    border-bottom:4px solid #5b5b5b;
    color:#b4b4b4;
}
.file{
    position:relative;
    justify-content:space-between;
    padding:0 13px 0 10px;
    border-top:1px solid #666;
    border-radius:10px 10px 0 0;
    background:linear-gradient(#565656,#4c4c4c);
    box-shadow:1px 0 0 #2c2c2c;
}
.first{
    width:126px;
    padding-left:13px;
    border-radius:16px 12px 0 0;
}
.f2{width:268px}
.f3{width:267px}
.f4{width:263px}
.f6{width:213px}
.file.on{
    background:linear-gradient(#808080,#5b5b5b);
    color:#fff;
}
.file b{
    color:#333;
    font-size:15px;
}
.add{
    width:22px;
    height:15px;
    margin:5px 0 0 6px;
    border-radius:3px 10px 3px 10px;
    background:#555;
    font-size:16px;
    font-weight:700;
}

/* properties palette */
main{
    flex:1;
    min-height:0;
    display:flex;
}
.props{
    flex:none;
    width:272px;
    padding:2px 13px 0 17px;
    background:#5c5c5c;
}
.props h3{
    height:22px;
    margin:0 -11px 0 -17px;
    padding-left:15px;
    border-radius:6px;
    background:#525252;
    font-size:12px;
    font-weight:400;
    line-height:24px;
}
.pick{
    display:flex;
    gap:9px;
    margin:12px -4px 4px 0;
}
.pick .combo{
    flex:none;
    width:170px;
    height:23px;
    margin-right:-2px;
    padding-left:3px;
    border-color:#3c3c3c #444;
}
.pick .combo select{
    border-right:1px solid #3c3c3c;
    margin-right:13px;
}
.pick .combo::after{
    right:4px;
    border-width:3px;
    border-bottom:0;
}
.sec{
    width:100%;
    height:22px;
    justify-content:space-between;
    padding:0 8px 0 6px;
    border:1px solid #333;
    background:#484848;
    color:#fff;
    font-weight:700;
}
.sec i{
    width:6px;
    height:2px;
    background:#fff;
}
.props table{
    width:225px;
    margin:0 0 3px 17px;
    border-spacing:0;
    table-layout:fixed;
}
.props th,.props td{
    height:21px;
    padding:2px 0 0 2px;
    border:1px solid #525252;
    border-width:0 1px 1px 0;
    white-space:nowrap;
    text-align:left;
    font-weight:400;
}
.props th{
    width:91px;
    padding:0 0 2px 6px;
    border-left-width:1px;
}
.props td.off{
    color:#a5a5a5;
}
td .rule{
    display:inline-block;
    margin:0 5px 4px 2px;
}
.chip{
    display:inline-block;
    width:10px;
    height:10px;
    margin:0 6px 0 1px;
    border:1px solid #000;
    background:#fff;
    vertical-align:-1px;
}

/* drawing area */
.canvas{
    flex:1;
    position:relative;
    overflow:hidden;
    background:#212830;
}
.drawing{
    display:block;
    width:100%;
    height:100%;
    fill:none;
    stroke:#e8e8e8;
}
.pipe{
    stroke:#f0f;
    stroke-width:15px;
}
.cross{
    stroke:#fff;
}
.dn{
    fill:#e8e8e8;
    stroke:none;
    font-family:Lato,Roboto,sans-serif;
    font-size:130px;
    font-weight:100;
}
.ucs{
    fill:#e8e8e8;
    stroke:none;
    font-size:20px;
    font-weight:300;
}
.viewlabel{
    position:absolute;
    left:3px;
    top:6px;
    color:#eee;
}
.mdi{
    position:absolute;
    top:7px;
    right:9px;
    display:flex;
    gap:4px;
}
.navbar{
    position:absolute;
    top:27px;
    right:4px;
    display:flex;
    flex-direction:column;
    align-items:center;
    gap:5px;
    width:32px;
    padding:2px 3px;
    border-radius:4px;
    background:#5a5f63;
}
.navbar svg{
    width:24px;
    height:24px;
    fill:#62676e;
    stroke:#43484d;
}
.navbar svg.tall{
    height:28px;
}
.navbar hr{
    width:26px;
    margin:0;
    border:0;
    border-top:1px solid #6b7074;
}
.dot{
    align-self:flex-end;
    width:8px;
    border-radius:4px;
    background:#474c50;
    color:#6b7074;
    font-size:8px;
    line-height:8px;
    text-align:center;
}
.command{
    position:absolute;
    left:27.4%;
    right:27.4%;
    bottom:1px;
    display:flex;
    height:26px;
    border:1px solid #777;
    border-radius:2px;
}
.grip{
    display:flex;
    align-items:center;
    gap:4px;
    width:53px;
    padding-left:3px;
    background:linear-gradient(#606060,#3d3d3d);
}
.grip i{
    width:5px;
    height:18px;
    background:radial-gradient(#999 1px,transparent 1px) 0 0/3px 3px;
}
.prompt{
    flex:1;
    display:flex;
    align-items:center;
    gap:4px;
    padding:0 3px 0 5px;
    background:rgba(255,255,255,.7);
}
.prompt input{
    flex:1;
    padding-left:2px;
}
.prompt input::placeholder{
    color:#777;
}

/* layout tabs and status bar */
.bottom{
    flex:none;
    display:flex;
    justify-content:space-between;
    height:29px;
    border-top:1px solid #555;
}
.layouts{
    display:flex;
    height:17px;
    padding-left:9px;
    gap:1px;
    color:#aaa;
}
.layouts button{
    width:51px;
    border-radius:2px 2px 10px 10px;
    background:#545454;
}
.layouts .on{
    background:linear-gradient(#666,#8a8a8a);
    color:#fff;
    font-weight:700;
}
.layouts .plus{
    width:22px;
    margin-left:4px;
    font-size:16px;
    font-weight:700;
}
.status{
    display:flex;
    gap:1px;
    height:27px;
    color:#c0c0c0;
}
.seg{
    display:flex;
    align-items:center;
    justify-content:space-around;
    border:1px solid #808080;
    background:#4d4d4d;
}
.seg svg{
    width:18px;
    height:18px;
    fill:none;
    stroke:currentColor;
}
.seg .txt{
    color:#fff;
}
.g1{width:29px}
.g2{width:65px}
.g3{width:102px}
.g4{width:107px}
.g5{width:40px}
.g6{width:26px}
.g7{width:70px}
.g8{width:51px}
.blue{
    color:#2494ff;
}

/* windows task bar */
.taskbar{
    flex:none;
    display:flex;
    height:40px;
    background:linear-gradient(90deg,#213a43,#21363f 60%,#1c2b40 80%,#1b2440);
}
.task{
    width:48px;
    margin-right:1px;
    border-bottom:2px solid transparent;
}
.task svg{
    width:24px;
    height:24px;
}
.ie{
    width:54px;
    gap:8px;
    padding-left:8px;
}
.ie .tri{
    border-left-color:#1a7af0;
}
.folder{
    margin-left:40px;
}
.run{
    border-image:linear-gradient(90deg,transparent 4px,#76b9ed 4px 44px,transparent 44px) 2;
}
.active{
    background:#4e626b;
    border-image:none;
    border-bottom-color:#76b9ed;
}
.tray{
    display:flex;
    align-items:center;
    gap:8px;
    margin-left:auto;
    color:#fff;
}
.ime{
    width:16px;
    font-size:14px;
}
.sogou{
    width:24px;
}
.sogou b{
    width:16px;
    border-radius:4px;
    background:#f4511e;
    font-size:14px;
}
time{
    position:relative;
    width:70px;
    text-align:center;
    line-height:17px;
}
time::after{
    content:"";
    position:absolute;
    right:2px;
    top:0;
    width:6px;
    height:6px;
    border-radius:3px;
    background:#f00;
}
.note{
    position:relative;
    width:30px;
    height:40px;
}
.note b{
    position:absolute;
    right:0;
    bottom:6px;
    width:14px;
    border-radius:8px;
    background:#444;
    line-height:14px;
}
.note .red{
    border-radius:0;
    background:#e00b1c;
    font-weight:400;
}
.note:last-child{
    margin-right:17px;
}
```
